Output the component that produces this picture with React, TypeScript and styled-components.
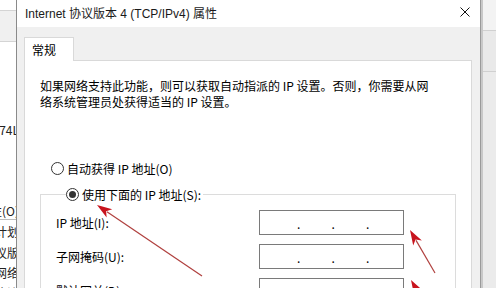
import React from 'react';
import styled, { createGlobalStyle } from 'styled-components';

const GlobalStyle = createGlobalStyle`
  html, body {
    margin: 0;
    padding: 0;
    overflow: hidden;
    background: #f0f0f0;
  }
  body {
    font-family: "Noto Sans CJK SC", "Liberation Sans", sans-serif;
    font-size: 12px;
    color: #000;
  }
`;

const Screen = styled.div`
  position: relative;
  display: flex;
  width: 496px;
  height: 288px;
  overflow: hidden;
  background: #f0f0f0;
`;

const BackWindow = styled.div`
  width: 16px;
  flex: none;
  background: #fff;
  border-right: 1px solid #8a8a8a;
  display: flex;
  flex-direction: column;
  overflow: hidden;
`;

const BackBand = styled.div<{ $h: number; $bg?: string; $line?: boolean }>`
  height: ${(p) => p.$h}px;
  flex: none;
  background: ${(p) => p.$bg || '#fff'};
  border-bottom: ${(p) => (p.$line ? '1px solid #d4d4d4' : 'none')};
`;

const BackRow = styled.div<{ $h: number; $line?: boolean }>`
  height: ${(p) => p.$h}px;
  flex: none;
  display: flex;
  justify-content: flex-end;
  align-items: center;
  white-space: nowrap;
  margin-right: -3px;
  font-size: 12px;
  color: #222;
  border-bottom: ${(p) => (p.$line ? '1px solid #bdbdbd' : 'none')};
`;

const Dialog = styled.div`
  width: 463px;
  flex: none;
  display: flex;
  flex-direction: column;
  background: #f0f0f0;
  border-right: 1px solid #9a9a9a;
`;

const TitleBar = styled.div`
  height: 27px;
  flex: none;
  background: #fff;
  display: flex;
  align-items: center;
  justify-content: space-between;
  padding: 0 10px 0 8px;
  font-family: "Liberation Sans", "Noto Sans CJK SC", sans-serif;
  font-size: 12px;
  color: #1a1a1a;
  span {
    margin-top: -3px;
  }
`;

const CloseIcon = styled.svg`
  width: 10px;
  height: 10px;
  margin-top: -3px;
`;

const Body = styled.div`
  flex: 1;
  display: flex;
  flex-direction: column;
  padding: 10px 8px 0 7px;
`;

const TabStrip = styled.div`
  display: flex;
`;

const Tab = styled.div`
  width: 50px;
  height: 24px;
  margin-bottom: -1px;
  position: relative;
  z-index: 1;
  background: #fff;
  border: 1px solid #d9d9d9;
  border-bottom: none;
  display: flex;
  align-items: center;
  padding-left: 7px;
  box-sizing: border-box;
`;

const Panel = styled.div`
  flex: 1;
  background: #fff;
  border: 1px solid #d9d9d9;
  border-bottom: none;
  padding: 17px 14px 0 15px;
`;

const Description = styled.p`
  margin: 0;
  line-height: 16px;
  width: 400px;
`;

const Choice = styled.label`
  display: flex;
  align-items: center;
  gap: 3px;
  height: 16px;
  white-space: nowrap;
`;

const RadioDot = styled.span<{ $checked?: boolean }>`
  width: 11px;
  height: 11px;
  border: 1px solid #333;
  border-radius: 50%;
  background: #fff;
  display: inline-flex;
  align-items: center;
  justify-content: center;
  flex: none;
  &::after {
    content: '';
    width: 7px;
    height: 7px;
    border-radius: 50%;
    background: ${(p) => (p.$checked ? '#333' : 'transparent')};
  }
`;

const AutoChoice = styled.div`
  margin: 50px 0 0 11px;
`;

const Group = styled.fieldset`
  margin: 10px 0 0 0;
  padding: 8px 0 0 15px;
  width: 416px;
  box-sizing: border-box;
  border: 1px solid #dcdcdc;
  border-bottom: none;
`;

const Legend = styled.legend`
  padding: 0 2px 0 0;
  margin-left: 10px;
`;

const FieldRow = styled.div`
  display: flex;
  align-items: center;
  height: 25px;
  margin-bottom: 9px;
`;

const FieldLabel = styled.span`
  width: 203px;
  flex: none;
`;

const IpBox = styled.div`
  width: 145px;
  height: 25px;
  box-sizing: border-box;
  border: 1px solid #7a7a7a;
  display: flex;
  align-items: center;
  padding: 2px 0 0 37px;
`;

const Dot = styled.span`
  width: 34.5px;
  font-size: 12px;
  line-height: 1;
`;

const Overlay = styled.svg`
  position: absolute;
  left: 0;
  top: 0;
  width: 496px;
  height: 288px;
  pointer-events: none;
`;

const RightWindow = styled.div`
  flex: 1;
  background: #ebebeb;
  border-left: 2px solid #c8c8c8;
  display: flex;
  flex-direction: column;
`;

const RightBand = styled.div<{ $h: number; $bg: string }>`
  height: ${(p) => p.$h}px;
  flex: none;
  background: ${(p) => p.$bg};
  border-bottom: 1px solid #d0d0d0;
`;

function IpField() {
  return (
    <IpBox>
      <Dot>.</Dot>
      <Dot>.</Dot>
      <Dot>.</Dot>
    </IpBox>
  );
}

function Arrow({ x1, y1, x2, y2 }: { x1: number; y1: number; x2: number; y2: number }) {
  // tail (x1,y1) -> tip (x2,y2)
  const dx = x2 - x1;
  const dy = y2 - y1;
  const len = Math.hypot(dx, dy);
  const ux = dx / len;
  const uy = dy / len;
  const headLen = 15;
  const headW = 5;
  const bx = x2 - ux * headLen;
  const by = y2 - uy * headLen;
  const px = -uy * headW;
  const py = ux * headW;
  return (
    <g>
      <line x1={x1} y1={y1} x2={bx + ux * 3} y2={by + uy * 3} stroke="#b0403e" strokeWidth={1.2} />
      <polygon
        points={`${x2},${y2} ${bx + px},${by + py} ${bx + ux * 4},${by + uy * 4} ${bx - px},${by - py}`}
        fill="#c8141e"
      />
    </g>
  );
}

const fields = ['IP 地址(I):', '子网掩码(U):', '默认网关(D):'];

export default function App() {
  return (
    <>
      <GlobalStyle />
      <Screen>
        <BackWindow>
          <BackBand $h={10} $line />
          <BackBand $h={30} $bg="#f0f0f0" $line />
          <BackBand $h={78} $bg="#fff" />
          <BackRow $h={18}>DC:74L</BackRow>
          <BackBand $h={63} $bg="#fff" />
          <BackRow $h={18} $line>属性(O)</BackRow>
          <BackRow $h={22}>包计划</BackRow>
          <BackRow $h={20}>协议版</BackRow>
          <BackRow $h={20}>网络</BackRow>
          <BackRow $h={20}>协议</BackRow>
        </BackWindow>
        <Dialog>
          <TitleBar>
            <span>Internet 协议版本 4 (TCP/IPv4) 属性</span>
            <CloseIcon viewBox="0 0 10 10">
              <path d="M0.5 0.5 L9.5 9.5 M9.5 0.5 L0.5 9.5" stroke="#111" strokeWidth={1} />
            </CloseIcon>
          </TitleBar>
          <Body>
            <TabStrip>
              <Tab>常规</Tab>
            </TabStrip>
            <Panel>
              <Description>
                如果网络支持此功能，则可以获取自动指派的 IP 设置。否则，你需要从网络系统管理员处获得适当的 IP 设置。
              </Description>
              <AutoChoice>
                <Choice>
                  <RadioDot />
                  自动获得 IP 地址(O)
                </Choice>
              </AutoChoice>
              <Group>
                <Legend>
                  <Choice>
                    <RadioDot $checked />
                    使用下面的 IP 地址(S):
                  </Choice>
                </Legend>
                {fields.map((f) => (
                  <FieldRow key={f}>
                    <FieldLabel>{f}</FieldLabel>
                    <IpField />
                  </FieldRow>
                ))}
              </Group>
            </Panel>
          </Body>
        </Dialog>
        <RightWindow>
          <RightBand $h={30} $bg="#f3f3f3" />
          <RightBand $h={40} $bg="#e9e9e9" />
        </RightWindow>
        <Overlay viewBox="0 0 496 288">
          <Arrow x1={202} y1={276} x2={97} y2={205} />
          <Arrow x1={435} y1={273} x2={410} y2={230} />
          <Arrow x1={440} y1={330} x2={411} y2={280} />
        </Overlay>
      </Screen>
    </>
  );
}
